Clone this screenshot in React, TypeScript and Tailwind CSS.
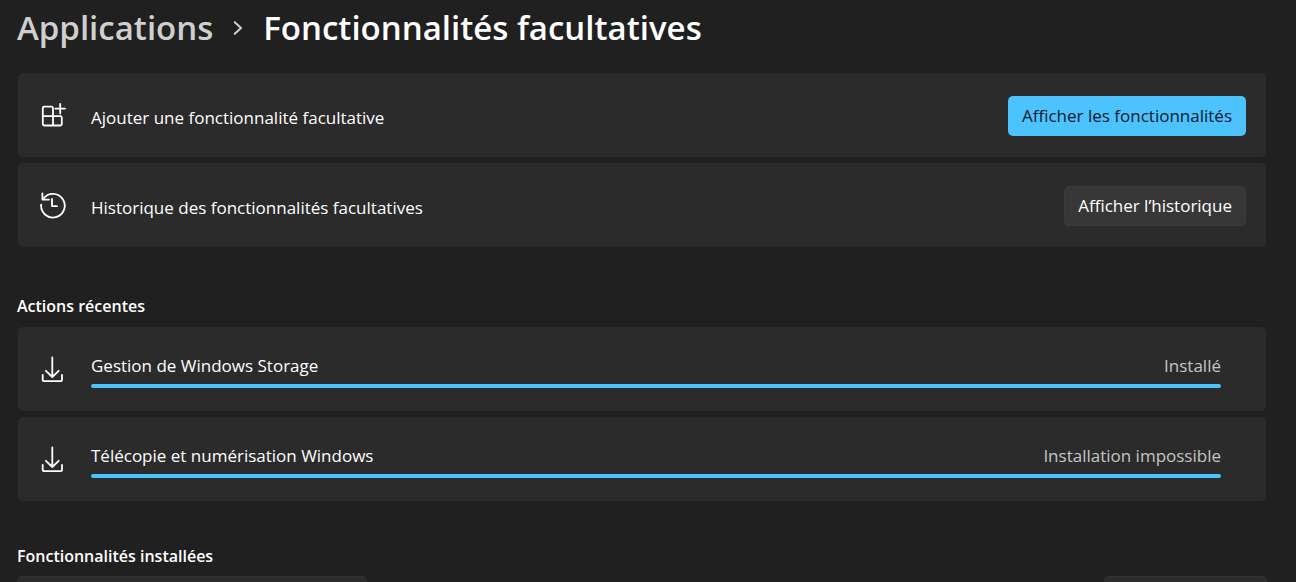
import type { ReactNode } from "react";

const recentActions = [
  { id: "storage", name: "Gestion de Windows Storage", status: "Installé" },
  { id: "fax", name: "Télécopie et numérisation Windows", status: "Installation impossible" },
];

function Icon({ children }: { children: ReactNode }) {
  return (
    <svg
      viewBox="0 0 28 28"
      className="size-7 shrink-0"
      fill="none"
      stroke="currentColor"
      strokeWidth="1.8"
      strokeLinecap="round"
      strokeLinejoin="round"
      aria-hidden="true"
    >
      {children}
    </svg>
  );
}

function AddFeatureIcon() {
  return (
    <Icon>
      <path d="M14 15.2V7.2a1.5 1.5 0 0 0-1.5-1.5H5.3a1.5 1.5 0 0 0-1.5 1.5v15.8a1.5 1.5 0 0 0 1.5 1.5h16a1.5 1.5 0 0 0 1.5-1.5v-6.3a1.5 1.5 0 0 0-1.5-1.5H3.8M14 15.2v9.3" />
      <path d="M21.2 2.8v9.8M16.3 7.6h9.8" />
    </Icon>
  );
}

function HistoryIcon() {
  return (
    <Icon>
      <path d="M2.2 13.6A11.8 11.8 0 1 0 4.4 7.8" />
      <path d="M3.4 2.4v6.2h6.6M13 8v7.2h5" />
    </Icon>
  );
}

function DownloadIcon() {
  return (
    <Icon>
      <path d="M13.3 2.4v19M6.9 15.8l6.4 6.2 6.4-6.2" />
      <path d="M3.7 20v4.4a1.8 1.8 0 0 0 1.8 1.8h15.7a1.8 1.8 0 0 0 1.8-1.8V20" />
    </Icon>
  );
}

function Card({ icon, children }: { icon: ReactNode; children: ReactNode }) {
  return (
    <li className="flex h-[84px] items-center gap-6 rounded-[5px] bg-[#2b2b2b] px-[21px]">
      {icon}
      {children}
    </li>
  );
}

export default function App() {
  return (
    <main className="h-screen overflow-hidden bg-[#202020] pr-[30px] pl-[18px] font-['Open_Sans','Noto_Sans',sans-serif] text-[17px] leading-6 text-white">
      <nav aria-label="Fil d’Ariane" className="-ml-px flex h-[73px] items-start pt-1 text-[33px] leading-[48px] font-semibold whitespace-nowrap">
        <a href="#applications" className="text-[#cfcfcf]">
          Applications
        </a>
        <svg viewBox="0 0 10 14" className="mx-5 mt-[17px] h-3.5 w-2.5 shrink-0" fill="none" stroke="#cfcfcf" strokeWidth="2" strokeLinecap="round" strokeLinejoin="round" aria-hidden="true">
          <path d="M1.8 1.2 8 7l-6.2 5.8" />
        </svg>
        <h1>Fonctionnalités facultatives</h1>
      </nav>

      <ul className="flex flex-col gap-1.5">
        <Card icon={<AddFeatureIcon />}>
          <span className="flex-1 pt-1.5">Ajouter une fonctionnalité facultative</span>
          <button type="button" className="mt-0.5 -mr-px h-10 rounded-[5px] bg-[#4cc2ff] px-3.5 text-[#071a26]">
            Afficher les fonctionnalités
          </button>
        </Card>
        <Card icon={<HistoryIcon />}>
          <span className="flex-1 pt-1.5">Historique des fonctionnalités facultatives</span>
          <button type="button" className="mt-0.5 -mr-px h-10 rounded-[5px] border border-[#3a3a3a] bg-[#373737] px-[13px]">
            Afficher l’historique
          </button>
        </Card>
      </ul>

      <section className="mt-[47px]">
        <h2 className="-ml-px text-base font-semibold">Actions récentes</h2>
        <ul className="mt-[9px] flex flex-col gap-1.5">
          {recentActions.map((action) => (
            <Card key={action.id} icon={<DownloadIcon />}>
              <div className="mr-6 flex flex-1 flex-col gap-1.5 pt-1">
                <div className="flex justify-between">
                  <label htmlFor={action.id}>{action.name}</label>
                  <span className="text-[#c5c5c5]">{action.status}</span>
                </div>
                <progress
                  id={action.id}
                  value={100}
                  max={100}
                  className="block h-1 w-full appearance-none overflow-hidden rounded-full [&::-webkit-progress-bar]:bg-[#4a4a4a] [&::-webkit-progress-value]:bg-[#4cc2ff]"
                />
              </div>
            </Card>
          ))}
        </ul>
      </section>

      <section className="mt-[43px]">
        <h2 id="installed" className="-ml-px text-base font-semibold">
          Fonctionnalités installées
        </h2>
        <div className="-mx-px mt-2 flex justify-between">
          <input type="search" aria-labelledby="installed" className="h-10 w-[350px] rounded-[5px] border border-[#333333] bg-[#2d2d2d] px-3" />
          <select aria-labelledby="installed" className="h-10 w-[163px] appearance-none rounded-[5px] border border-[#353535] bg-[#2d2d2d] px-3">
            <option>Nom</option>
          </select>
        </div>
      </section>
    </main>
  );
}
